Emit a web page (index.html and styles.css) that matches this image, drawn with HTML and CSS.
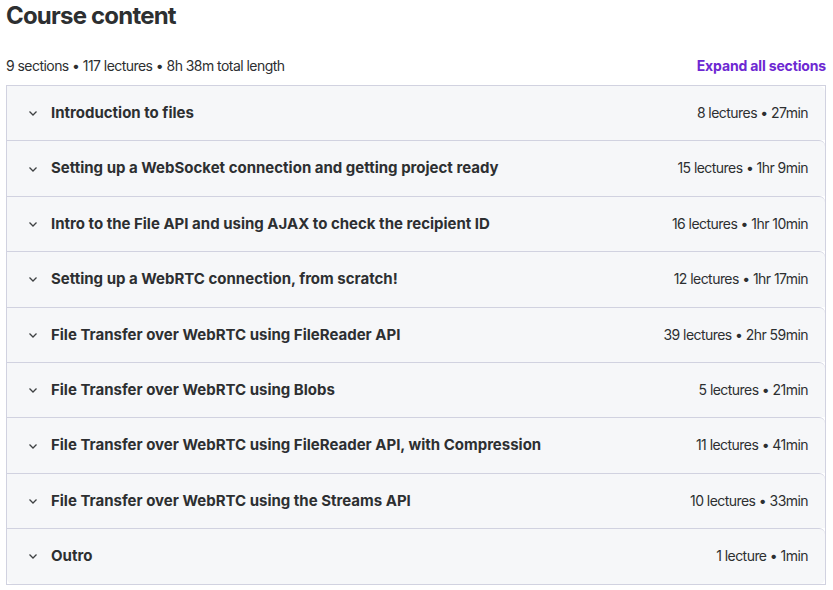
FILE: index.html
```html
<!DOCTYPE html>
<html>
<head>
<meta charset="utf-8">
<link rel="stylesheet" href="styles.css">
</head>
<body>
<div class="page">
  <h2 class="title">Course content</h2>
  <div class="summary">
    <span class="stats">9 sections • 117 lectures • 8h 38m total length</span>
    <button class="expand">Expand all sections</button>
  </div>
  <div class="sections">
    <div class="section"><svg class="chev" viewBox="0 0 12 12"><path d="M2.5 4.5 L6 8 L9.5 4.5"/></svg><span class="name">Introduction to files</span><span class="meta">8 lectures • 27min</span></div>
    <div class="section"><svg class="chev" viewBox="0 0 12 12"><path d="M2.5 4.5 L6 8 L9.5 4.5"/></svg><span class="name">Setting up a WebSocket connection and getting project ready</span><span class="meta">15 lectures • 1hr 9min</span></div>
    <div class="section"><svg class="chev" viewBox="0 0 12 12"><path d="M2.5 4.5 L6 8 L9.5 4.5"/></svg><span class="name">Intro to the File API and using AJAX to check the recipient ID</span><span class="meta">16 lectures • 1hr 10min</span></div>
    <div class="section"><svg class="chev" viewBox="0 0 12 12"><path d="M2.5 4.5 L6 8 L9.5 4.5"/></svg><span class="name">Setting up a WebRTC connection, from scratch!</span><span class="meta">12 lectures • 1hr 17min</span></div>
    <div class="section"><svg class="chev" viewBox="0 0 12 12"><path d="M2.5 4.5 L6 8 L9.5 4.5"/></svg><span class="name">File Transfer over WebRTC using FileReader API</span><span class="meta">39 lectures • 2hr 59min</span></div>
    <div class="section"><svg class="chev" viewBox="0 0 12 12"><path d="M2.5 4.5 L6 8 L9.5 4.5"/></svg><span class="name">File Transfer over WebRTC using Blobs</span><span class="meta">5 lectures • 21min</span></div>
    <div class="section"><svg class="chev" viewBox="0 0 12 12"><path d="M2.5 4.5 L6 8 L9.5 4.5"/></svg><span class="name">File Transfer over WebRTC using FileReader API, with Compression</span><span class="meta">11 lectures • 41min</span></div>
    <div class="section"><svg class="chev" viewBox="0 0 12 12"><path d="M2.5 4.5 L6 8 L9.5 4.5"/></svg><span class="name">File Transfer over WebRTC using the Streams API</span><span class="meta">10 lectures • 33min</span></div>
    <div class="section"><svg class="chev" viewBox="0 0 12 12"><path d="M2.5 4.5 L6 8 L9.5 4.5"/></svg><span class="name">Outro</span><span class="meta">1 lecture • 1min</span></div>
  </div>
</div>
</body>
</html>
```
FILE: styles.css
```css
* { box-sizing: border-box; }
html, body { margin: 0; background: #ffffff; }
body {
  font-family: Inter, "Noto Sans", "Liberation Sans", sans-serif;
  color: #2d2f31;
}
.page {
  padding: 0 7px 0 6px;
}
.title {
  margin: 0;
  font-size: 24px;
  line-height: 32px;
  font-weight: 700;
  letter-spacing: -0.8px;
}
.summary {
  margin-top: 18px;
  margin-bottom: 5px;
  height: 30px;
  display: flex;
  align-items: center;
  justify-content: space-between;
  font-size: 14px;
}
.stats { color: #2d2f31; letter-spacing: -0.55px; }
.expand {
  border: 0;
  background: none;
  padding: 0;
  font-family: inherit;
  font-size: 14px;
  font-weight: 700;
  letter-spacing: -0.15px;
  color: #6d28d2;
  cursor: pointer;
}
.sections {
  border: 1px solid #d1d2e0;
}
.section {
  display: flex;
  align-items: center;
  background: #f6f7f9;
  padding: 16px 17px 16px 20px;
  line-height: 22.4px;
  border-top: 1px solid #d1d2e0;
  border-top-right-radius: 6px;
}
.section:first-child { border-top: 0; }
.section:last-child { border-bottom-left-radius: 6px; border-bottom-right-radius: 6px; }
.chev {
  width: 12px;
  height: 12px;
  flex: none;
  fill: none;
  stroke: #3e4143;
  stroke-width: 1.3;
  margin-right: 12px;
}
.name {
  flex: 1;
  font-size: 15px;
  font-weight: 700;
  color: #2d2f31;
}
.meta {
  font-size: 14px;
  letter-spacing: -0.55px;
  color: #2d2f31;
}
```
